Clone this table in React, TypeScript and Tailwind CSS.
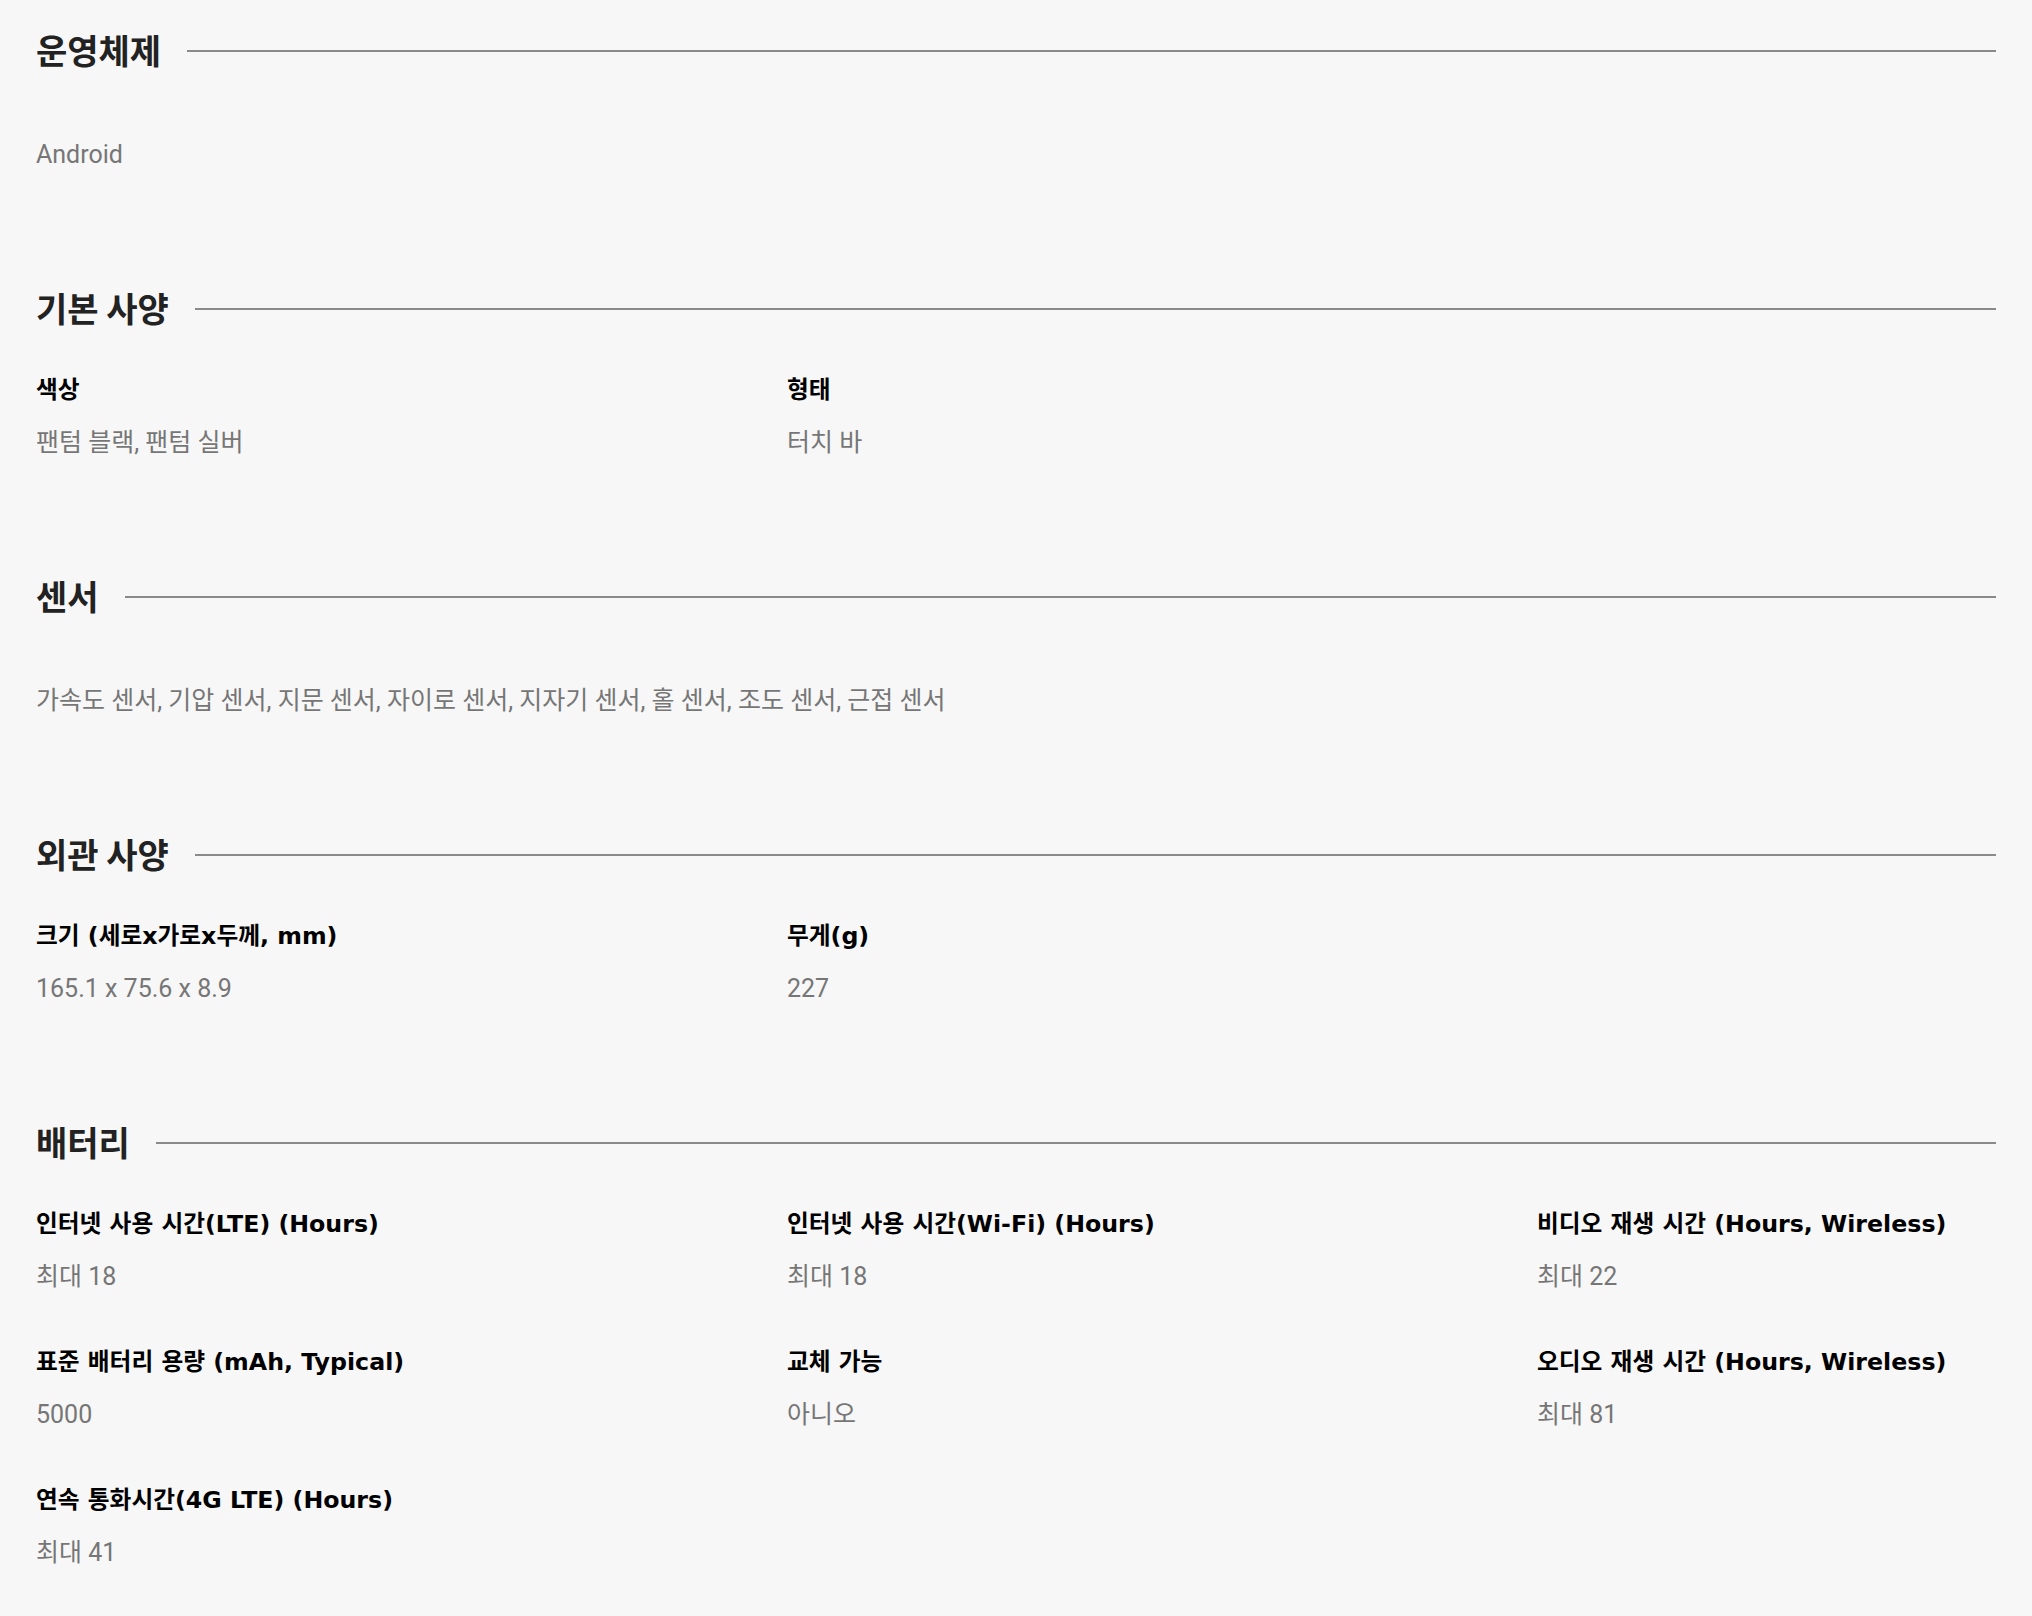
const KR = "font-['Roboto','Noto_Sans_CJK_KR',sans-serif]";

type Spec = { label: string; value: string };

const basic: Spec[] = [
  { label: "색상", value: "팬텀 블랙, 팬텀 실버" },
  { label: "형태", value: "터치 바" },
];

const exterior: Spec[] = [
  { label: "크기 (세로x가로x두께, mm)", value: "165.1 x 75.6 x 8.9" },
  { label: "무게(g)", value: "227" },
];

const battery: Spec[] = [
  { label: "인터넷 사용 시간(LTE) (Hours)", value: "최대 18" },
  { label: "인터넷 사용 시간(Wi-Fi) (Hours)", value: "최대 18" },
  { label: "비디오 재생 시간 (Hours, Wireless)", value: "최대 22" },
  { label: "표준 배터리 용량 (mAh, Typical)", value: "5000" },
  { label: "교체 가능", value: "아니오" },
  { label: "오디오 재생 시간 (Hours, Wireless)", value: "최대 81" },
  { label: "연속 통화시간(4G LTE) (Hours)", value: "최대 41" },
];

function SectionTitle({ title }: { title: string }) {
  return (
    <div className="flex h-10 items-center">
      <h2 className="shrink-0 font-['Noto_Sans_CJK_KR',sans-serif] text-[34px] font-bold leading-10 text-[#222]">
        {title}
      </h2>
      <div className="ml-[26px] mt-[2px] h-[2px] flex-1 bg-[#8a8a8a]" />
    </div>
  );
}

function PlainValue({ text }: { text: string }) {
  return (
    <p className={`${KR} mt-[69px] text-[25px] leading-8 text-[#767676]`}>
      {text}
    </p>
  );
}

function SpecGrid({ items }: { items: Spec[] }) {
  return (
    <div className="mt-[46px] grid grid-cols-[751px_750px_1fr] gap-y-[53px]">
      {items.map((s) => (
        <div key={s.label}>
          <div className="font-['DejaVu_Sans','Noto_Sans_CJK_KR',sans-serif] text-[23.7px] font-bold leading-8 text-black">
            {s.label}
          </div>
          <div className={`${KR} mt-[21px] text-[25px] leading-8 text-[#767676]`}>
            {s.value}
          </div>
        </div>
      ))}
    </div>
  );
}

export default function App() {
  return (
    <div className="min-h-screen bg-[#f7f7f7] px-9 pb-12 pt-[30px]">
      <div className="flex flex-col gap-[117px]">
        <section>
          <SectionTitle title="운영체제" />
          <PlainValue text="Android" />
        </section>
        <section>
          <SectionTitle title="기본 사양" />
          <SpecGrid items={basic} />
        </section>
        <section>
          <SectionTitle title="센서" />
          <PlainValue text="가속도 센서, 기압 센서, 지문 센서, 자이로 센서, 지자기 센서, 홀 센서, 조도 센서, 근접 센서" />
        </section>
        <section>
          <SectionTitle title="외관 사양" />
          <SpecGrid items={exterior} />
        </section>
        <section>
          <SectionTitle title="배터리" />
          <SpecGrid items={battery} />
        </section>
      </div>
    </div>
  );
}
